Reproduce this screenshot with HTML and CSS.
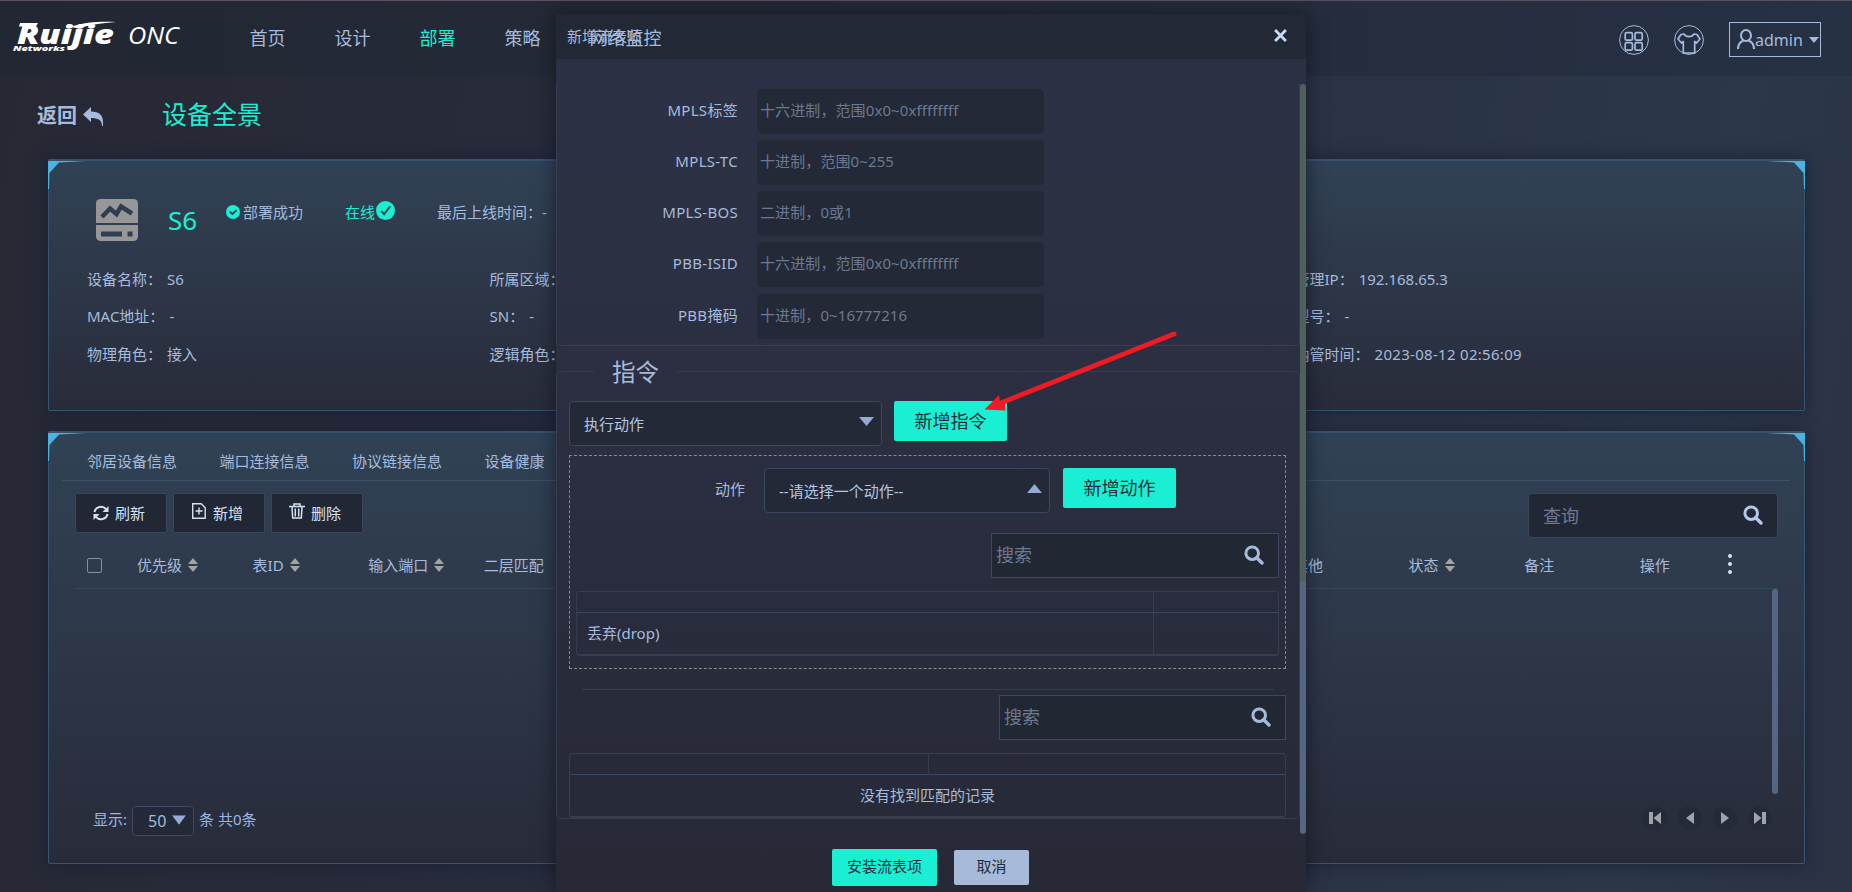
FILE: index.html
```html
<!DOCTYPE html>
<html lang="zh-CN">
<head>
<meta charset="utf-8">
<title>Ruijie ONC</title>
<link rel="stylesheet" href="styles.css">
</head>
<body>
<svg class="defs" width="0" height="0" aria-hidden="true">
  <symbol id="search" viewBox="0 0 20 20"><circle cx="8.2" cy="8.2" r="6.3" fill="none" stroke="currentColor" stroke-width="3"/><path d="M12.8 12.8l5.2 5.2" stroke="currentColor" stroke-width="3.4" stroke-linecap="round"/></symbol>
  <symbol id="sort" viewBox="0 0 10 14"><path d="M5 0l5 6H0zM5 14L0 8h10z" fill="#a3a3a3"/></symbol>
  <symbol id="down" viewBox="0 0 15 10"><path d="M0 0h15L7.500 10z" fill="currentColor"/></symbol>
  <symbol id="up" viewBox="0 0 15 10"><path d="M0 10h15L7.500 0z" fill="currentColor"/></symbol>
</svg>

<header class="topbar">
  <svg class="logo" width="180" height="40" viewBox="0 0 180 40">
    <g fill="#fff" font-style="italic">
      <text x="17" y="25.500" font-family="Open Sans" font-weight="800" font-size="27" textLength="97" lengthAdjust="spacingAndGlyphs">Ruijie</text>
      <path d="M71 9C84 4 100 3.500 116 4C102 5 90 6.500 79 10.500z"/>
      <path d="M20 5h18l-2 3.500H19z"/>
      <text x="13" y="33" font-family="Open Sans" font-weight="800" font-size="7.500" textLength="52" lengthAdjust="spacingAndGlyphs">Networks</text>
      <text x="128" y="25.500" font-family="Open Sans" font-size="24" textLength="51" lengthAdjust="spacingAndGlyphs">ONC</text>
    </g>
  </svg>
  <nav class="nav">
    <a>首页</a><a>设计</a><a class="active">部署</a><a>策略</a><a class="nav-over">网络监控</a>
  </nav>
  <div class="tools">
    <svg width="30" height="30" viewBox="0 0 30 30" fill="none" stroke="#a6bbdc"><circle cx="15" cy="15" r="14.400"/><g stroke-width="1.700"><rect x="6.200" y="7.700" width="7.200" height="7.500" rx="1.500"/><rect x="16" y="7.700" width="7.200" height="7.500" rx="1.500"/><rect x="6.200" y="17.700" width="7.200" height="7.500" rx="1.500"/><rect x="16" y="17.700" width="7.200" height="7.500" rx="1.500"/></g></svg>
    <svg width="30" height="30" viewBox="0 0 30 30" fill="none" stroke="#a6bbdc"><circle cx="15" cy="15" r="14.400"/><path stroke-width="1.700" stroke-linejoin="round" d="M10 9C12 12.500 18 12.500 20 9L23 9.500L26 14L22.500 18L20.700 16.500V28H9.300V16.500L7.500 18L4 14L7 9.500z"/></svg>
    <div class="user">
      <svg width="18" height="21" viewBox="0 0 18 21" fill="none" stroke="#a6bbdc" stroke-width="2"><ellipse cx="9" cy="6.500" rx="5" ry="5.500"/><path d="M1 20C1 15 4 12.500 6.500 11.500M17 20C17 15 14 12.500 11.500 11.500"/></svg><span>admin</span><svg class="caret" width="10" height="6" viewBox="0 0 15 10" preserveAspectRatio="none"><use href="#down"/></svg>
    </div>
  </div>
</header>

<main>
  <div class="heading">
    <a class="back">返回 <svg width="21" height="19" viewBox="0 0 21 19"><path d="M8 0v4.500c8 0 13 3 12 14.500h-1c0-6-4-8-11-8V15L0 7.500z" fill="#a6bbdc"/></svg></a>
    <h1>设备全景</h1>
  </div>

  <section class="panel device">
    <svg class="corner left" width="38" height="28" viewBox="0 0 38 28"><path d="M0 0h38L11 1.500L1.500 12L1 28H0z" fill="#4bb3e2"/></svg>
    <svg class="corner right" width="38" height="28" viewBox="0 0 38 28"><path d="M0 0h38L11 1.500L1.500 12L1 28H0z" fill="#4bb3e2"/></svg>
    <div class="summary">
      <svg width="42" height="42" viewBox="0 0 42 42"><rect width="42" height="42" rx="4.500" fill="#979797"/><path d="M0 25h42" stroke="#2f3e50" stroke-width="2"/><path d="M6 18L14 9.500l6.500 5.500L25 7.500l11 7" fill="none" stroke="#2f3e50" stroke-width="4.500"/><path d="M5 32.500h21v5H5zM31.500 32.500h5v5h-5z" fill="#2f3e50"/></svg>
      <strong>S6</strong>
      <span class="deployed"><svg width="14" height="14" viewBox="0 0 20 20"><circle cx="10" cy="10" r="10" fill="#1aefd3"/><path d="M5.500 9.500l3.500 3.500 6-5.500" fill="none" stroke="#2f3e50" stroke-width="2.600"/></svg>部署成功</span>
      <span class="online">在线<svg width="19" height="19" viewBox="0 0 20 20"><circle cx="10" cy="10" r="10" fill="#1aefd3"/><path d="M5.500 10.500l3 3.500 6.500-8.500" fill="none" stroke="#2f3e50" stroke-width="2"/></svg></span>
      <span>最后上线时间：-</span>
    </div>
    <div class="facts">
      <span>设备名称：<b>S6</b></span><span>所属区域：</span><span></span><span>管理IP：<b>192.168.65.3</b></span>
      <span>MAC地址：<b>-</b></span><span>SN：<b>-</b></span><span></span><span>型号：<b>-</b></span>
      <span>物理角色：<b>接入</b></span><span>逻辑角色：</span><span></span><span>纳管时间：<b class="stamp">2023-08-12 02:56:09</b></span>
    </div>
  </section>

  <section class="panel flows">
    <svg class="corner left" width="38" height="28" viewBox="0 0 38 28"><path d="M0 0h38L11 1.500L1.500 12L1 28H0z" fill="#4bb3e2"/></svg>
    <svg class="corner right" width="38" height="28" viewBox="0 0 38 28"><path d="M0 0h38L11 1.500L1.500 12L1 28H0z" fill="#4bb3e2"/></svg>
    <div class="tabs"><a>邻居设备信息</a><a>端口连接信息</a><a>协议链接信息</a><a>设备健康</a></div>
    <div class="toolbar">
      <button><svg width="16" height="16" viewBox="0 0 16 16" fill="none" stroke="#d5e2f5" stroke-width="2"><path d="M1.500 7A6.500 6.200 0 0 1 13 4.200M14.500 9A6.500 6.200 0 0 1 3 11.800"/><path d="M15.500 1v6h-6zM.5 15V9h6z" fill="#d5e2f5" stroke="none"/></svg>刷新</button>
      <button><svg class="raised" width="16" height="16" viewBox="0 0 16 16" fill="none" stroke="#d5e2f5" stroke-width="1.400"><path d="M1.700.8h8.500l4 4v10.400H1.700zM8 4.500v7M4.500 8h7"/></svg>新增</button>
      <button><svg class="raised" width="16" height="16" viewBox="0 0 16 16" fill="none" stroke="#d5e2f5" stroke-width="1.500"><path d="M0 3.500h16M5 3V1h6v2M3 4l.7 11h8.600L13 4M6.300 5.500v8M9.700 5.500v8"/></svg>删除</button>
      <label class="query"><span>查询</span><svg width="20" height="20"><use href="#search"/></svg></label>
    </div>
    <div class="thead">
      <i class="checkbox"></i>
      <div class="cols">
        <span>优先级<svg width="10" height="14"><use href="#sort"/></svg></span>
        <span>表ID<svg width="10" height="14"><use href="#sort"/></svg></span>
        <span>输入端口<svg width="10" height="14"><use href="#sort"/></svg></span>
        <span>二层匹配</span><span></span><span></span><span></span><span></span><span></span><span></span>
        <span>其他</span>
        <span>状态<svg width="10" height="14"><use href="#sort"/></svg></span>
        <span>备注</span><span>操作</span>
      </div>
      <svg width="4" height="20" viewBox="0 0 4 20" fill="#d5e2f5"><circle cx="2" cy="2" r="2"/><circle cx="2" cy="10" r="2"/><circle cx="2" cy="18" r="2"/></svg>
    </div>
    <div class="tbody"><i></i></div>
    <footer class="paging">
      <span class="txt">显示:</span>
      <div class="size"><span>50</span><svg width="14" height="10" viewBox="0 0 15 10"><use href="#down"/></svg></div>
      <span class="txt">条 共0条</span>
      <div class="pager">
        <i><svg width="12" height="12" viewBox="0 0 12 12"><path d="M0 0h4v12H0zM12 0v12L4.500 6z"/></svg></i>
        <i><svg width="12" height="12" viewBox="0 0 12 12"><path d="M10 0v12L2 6z"/></svg></i>
        <i><svg width="12" height="12" viewBox="0 0 12 12"><path d="M2 0v12l8-6z"/></svg></i>
        <i><svg width="12" height="12" viewBox="0 0 12 12"><path d="M8 0h4v12H8zM0 0v12l7.500-6z"/></svg></i>
      </div>
    </footer>
  </section>
</main>

<div class="modal">
  <div class="modal-head"><span>新增流表项</span><svg width="13" height="13" viewBox="0 0 12 12"><path d="M1 1l10 10M11 1L1 11" stroke="#c8d8f0" stroke-width="2.600"/></svg></div>
  <div class="modal-scroll">
    <div class="match">
      <div class="field"><label>MPLS标签</label><div class="input">十六进制，范围0x0~0xffffffff</div></div>
      <div class="field"><label>MPLS-TC</label><div class="input">十进制，范围0~255</div></div>
      <div class="field"><label>MPLS-BOS</label><div class="input">二进制，0或1</div></div>
      <div class="field"><label>PBB-ISID</label><div class="input">十六进制，范围0x0~0xffffffff</div></div>
      <div class="field last"><label>PBB掩码</label><div class="input">十进制，0~16777216</div></div>
    </div>
    <fieldset class="orders">
      <legend>指令</legend>
      <div class="line">
        <div class="select wide"><span>执行动作</span><svg width="15" height="9" viewBox="0 0 15 10" preserveAspectRatio="none"><use href="#down"/></svg></div>
        <button class="primary">新增指令</button>
      </div>
      <div class="actions">
        <div class="line">
          <label>动作</label>
          <div class="select"><span>--请选择一个动作--</span><svg width="15" height="9" viewBox="0 0 15 10" preserveAspectRatio="none"><use href="#up"/></svg></div>
          <button class="primary">新增动作</button>
        </div>
        <div class="find"><span>搜索</span><svg width="20" height="20"><use href="#search"/></svg></div>
        <div class="grid drop"><i></i><i></i><span>丢弃(drop)</span><span></span></div>
      </div>
      <hr>
      <div class="find outer"><span>搜索</span><svg width="20" height="20"><use href="#search"/></svg></div>
      <div class="grid empty"><i></i><i></i><span>没有找到匹配的记录</span></div>
    </fieldset>
    <div class="scrollbar"><i></i></div>
  </div>
  <div class="modal-foot"><button class="install">安装流表项</button><button class="cancel">取消</button></div>
</div>

<svg class="arrow" width="200" height="90" viewBox="0 0 200 90"><path d="M192 6L20 74.500" stroke="#ed1c24" stroke-width="5" stroke-linecap="round"/><path d="M2.500 81.500L17 67l1 7 5 2 .5 6.500z" fill="#ed1c24"/></svg>
</body>
</html>
```
FILE: styles.css
```css
* { box-sizing: border-box; }
html, body { height: 892px; overflow: hidden; }
body {
  position: relative;
  margin: 0;
  font: 15px/22px "Noto Sans", "Noto Sans CJK SC", sans-serif;
  color: #a6bbdc;
  background: linear-gradient(100deg, #272834 0%, #272b3a 25%, #2a3245 65%, #2c374a 88%, #2a3244 100%);
}
svg { display: block; flex: none; }
.defs { position: absolute; }
b { font-weight: 400; }
button { font: inherit; padding: 0; margin: 0; border: 0; }
i { display: block; font-style: normal; }

/* Top bar */
.topbar {
  height: 76px;
  display: flex;
  border-top: 1px solid #5a5060;
  background: linear-gradient(90deg, #222733, #242b39 50%, #263144);
}
.logo { margin-top: 17px; overflow: visible; }
.nav { display: flex; gap: 49px; padding-left: 69.500px; font-size: 18px; line-height: 26px; padding-top: 24px; }
.active { color: #1aefd3; }
.nav-over { position: relative; z-index: 5; white-space: nowrap; }
.tools { display: flex; margin-left: auto; padding: 21px 31px 0 0; gap: 25px; }
.tools > svg { margin-top: 3px; }
.user { width: 92px; height: 35px; border: 1px solid #a6bbdc; display: flex; align-items: center; padding-left: 7px; font-size: 16px; line-height: 30px; }
.caret { margin-left: 6px; }

/* Page heading */
.heading { display: flex; height: 83px; padding-left: 37px; line-height: 30px; }
.back { display: flex; width: 125px; gap: 6px; padding-top: 24.500px; font-weight: 700; font-size: 20px; }
.back svg { margin-top: 6px; }
h1 { margin: 0; padding-top: 23px; font-size: 25px; font-weight: 400; color: #1aefd3; }

/* Panels */
.panel {
  position: relative;
  width: 1757px;
  margin-left: 48px;
  border: 1px solid #34566f;
  border-top: 2px solid #38526a;
  border-radius: 2px;
  background: linear-gradient(#30425a 0%, #304154 4%, #2d3748 50%, #282b3a 100%);
  box-shadow: 0 0 16px #1a2136;
}
.corner { position: absolute; top: 0; left: -1px; }
.corner.right { left: auto; right: -1px; transform: scaleX(-1); }
.device { height: 252px; }
.flows { height: 433px; margin-top: 20px; display: flex; flex-direction: column; }
.summary { display: flex; height: 100px; padding: 38px 0 0 47px; }
.summary strong { width: 58px; margin: 4px 0 0 30px; font-size: 26px; line-height: 34px; font-weight: 400; color: #1aefd3; }
.summary > span { display: flex; align-items: center; height: 26px; }
.deployed { width: 119px; gap: 3px; }
.online { width: 92px; color: #1aefd3; gap: 1px; }
.online svg { margin-bottom: 4px; }
.facts { display: grid; grid-template-columns: repeat(4, 402.500px); grid-auto-rows: 37.300px; padding-left: 38px; white-space: nowrap; line-height: 37px; }
.facts b { margin-left: 5px; }
.facts .stamp { letter-spacing: .3px; }

/* Flow table */
.tabs { display: flex; height: 48px; margin: 0 14px 0 13px; padding: 17px 0 0 25px; gap: 42.500px; border-bottom: 1px solid #3f5067; }
.toolbar { display: flex; gap: 6px; margin: 12px 26px 0; height: 45px; }
.toolbar button { width: 92px; height: 40px; display: flex; align-items: center; padding-left: 17px; gap: 6px; background: #212734; border: 1px solid #3a4558; border-radius: 2px; color: #d5e2f5; }
.toolbar .raised { margin-top: -4px; }
.query { margin-left: auto; width: 250px; height: 45px; display: flex; align-items: center; justify-content: space-between; padding: 0 14px; background: #212734; border: 1px solid #3a4558; border-radius: 4px; font-size: 18px; color: #6b7a92; }
.query svg { color: #b4c8e8; margin-top: -1px; }
.thead { display: flex; align-items: center; height: 51px; margin: 0 26px; padding: 3px 0 0 12px; border-bottom: 1px solid #37495c; }
.checkbox { width: 15px; height: 15px; border: 1px solid #8290a6; border-radius: 2px; margin-top: 2px; }
.cols { display: grid; grid-template-columns: repeat(14, 115.600px); width: 1591px; margin-left: 35px; white-space: nowrap; }
.cols span { display: flex; align-items: center; gap: 6px; height: 22px; }
.thead > svg { margin-top: -2px; }
.tbody { height: 205px; margin: 0 26px; }
.tbody i { width: 6px; height: 205px; margin-left: auto; border-radius: 3px; background: #556682; }
.paging { display: flex; align-items: center; padding-left: 44px; height: 54px; color: #9bb6e2; }
.paging .txt { margin-top: -4px; }
.size { display: flex; align-items: center; width: 62px; height: 30px; margin: -1px 5px 0 5px; padding: 0 0 0 15px; gap: 6px; background: #232936; border: 1px solid #3c4a64; border-radius: 4px; color: #a6bbdc; font-size: 16px; }
.size svg { margin-top: -2px; color: #93abd5; }
.pager { display: flex; gap: 11px; margin: -6px 32px 0 auto; }
.pager i { width: 24px; height: 24px; border-radius: 50%; background: #252a38; display: grid; place-items: center; fill: #a0a3ab; }

/* Dialog */
.modal {
  position: absolute;
  z-index: 2;
  left: 556px;
  top: 14px;
  width: 750px;
  height: 878px;
  background: linear-gradient(#2d3145, #2c3043 30%, #292c3c 70%, #272937);
  box-shadow: 0 0 18px rgba(8, 12, 22, .6);
}
.modal-head { height: 45px; display: flex; justify-content: space-between; padding: 11px 19px 0 11px; background: #222835; }
.modal-head svg { margin-top: 4px; }
.modal-scroll { position: relative; height: 750px; margin-top: 25px; }
.match { width: 744px; height: 262px; padding-top: 5px; border: solid #383d50; border-width: 0 1px 1px; border-radius: 0 0 5px 5px; }
.field { display: flex; height: 45px; margin-bottom: 6px; }
.field.last { margin-top: 7px; }
.field label { width: 182px; padding-right: 1px; margin-right: 18px; text-align: right; line-height: 42px; letter-spacing: .3px; }
.input { width: 287px; padding-left: 3px; background: #232936; border-radius: 5px; line-height: 43px; letter-spacing: .1px; color: #6b7a92; }
.orders { width: 744px; height: 460px; margin: 13px 0 0; padding: 0 13px; border: 1px solid #383d50; border-radius: 5px; min-inline-size: 0; }
.orders legend { margin-left: 24px; padding: 0 18px; font-size: 23.500px; line-height: 24px; position: relative; top: 1px; }
.line { display: flex; }
.orders > .line { margin: 18px 0 0 -1px; }
.select { width: 286px; height: 45px; display: flex; align-items: center; justify-content: space-between; padding: 0 7px 0 14px; background: #232936; border: 1px solid #3c4760; border-radius: 4px; color: #b4c6e2; }
.select.wide { width: 313px; }
.select svg { margin-top: -4px; color: #93abd5; }
.primary { width: 113px; height: 40px; margin-left: 12px; border-radius: 2px; background: #1aefd3; color: #232c3b; font-size: 18px; line-height: 38px; }
.actions { width: 717px; height: 214px; margin: 9px 0 0 -1px; padding: 12px 6px 0 7px; border: 1px dashed #8a8a82; }
.actions label { width: 168px; margin-right: 19px; text-align: right; line-height: 42px; }
.actions .primary { margin-left: 13px; }
.find { width: 288px; height: 45px; margin: 20px 0 0 auto; padding: 0 14px 0 4px; display: flex; align-items: center; justify-content: space-between; border: 1px solid #3c4760; background: #212834; font-size: 18px; color: #6b7a92; }
.find span { margin-top: -2px; }
.find svg { color: #a6bbdc; margin-top: -1px; }
.grid { display: grid; grid-template-rows: 21px 1fr; height: 65px; margin-top: 13px; border: 1px solid #373c4e; border-bottom-width: 2px; border-radius: 4px; }
.grid i { border-bottom: 1px solid #3c4864; }
.drop { grid-template-columns: 577px 1fr; margin-left: -1px; }
.drop i:first-child, .drop span:nth-of-type(1) { border-right: 1px solid #373c4e; }
.drop span { padding-left: 10px; line-height: 40px; }
.orders hr { height: 1px; margin: 20px 12px 0; border: 0; background: #373c4e; }
.find.outer { width: 287px; margin: 5px 0 0 auto; }
.empty { width: 717px; margin-left: -1px; grid-template-columns: 359px 1fr; }
.empty i:first-child { border-right: 1px solid #373c4e; }
.empty span { grid-column: 1 / 3; text-align: center; line-height: 40px; }
.scrollbar { position: absolute; right: 0; top: 0; width: 6px; height: 750px; border-radius: 3px; background: #50605c; padding-top: 497px; }
.scrollbar i { height: 252px; border-radius: 3px; background: #556682; }
.modal-foot { display: flex; align-items: center; gap: 17px; height: 38px; margin-top: 14px; padding-left: 276px; color: #232c3b; }
.modal-foot button { color: #232c3b; border-radius: 2px; line-height: 20px; padding-bottom: 2px; }
.install { width: 105px; height: 37px; background: #1aefd3; }
.cancel { width: 75px; height: 35px; background: #a6bbd9; }

.arrow { position: absolute; z-index: 4; left: 982px; top: 328px; }
```
